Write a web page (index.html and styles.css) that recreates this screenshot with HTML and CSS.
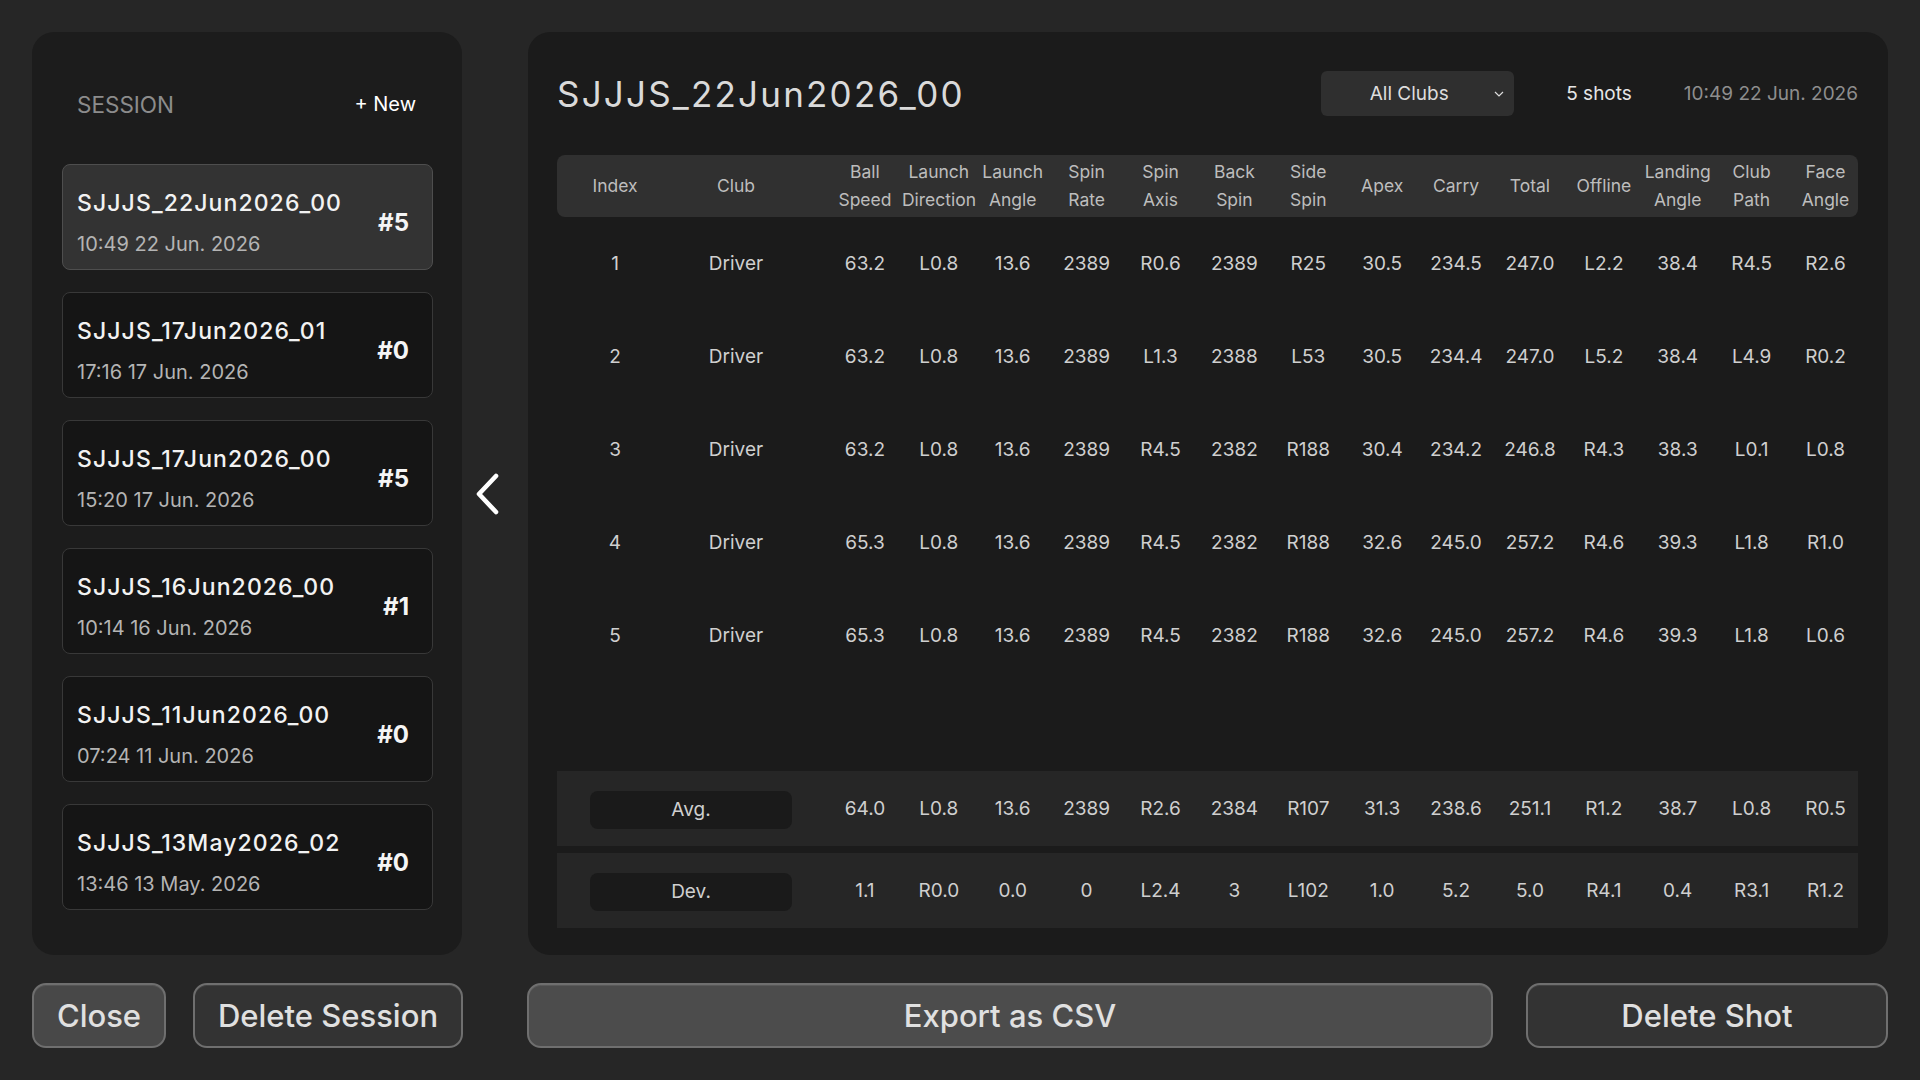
FILE: index.html
```
<!DOCTYPE html>
<html lang="en">
<head>
  <meta charset="UTF-8">
  <title>Sessions</title>
  <link rel="stylesheet" href="styles.css">
</head>
<body>

  <div class="main-row">
    <div class="session-panel">
      <div class="session-head">
        <span class="session-label">SESSION</span>
        <span class="new-link">+ New</span>
      </div>
      <div class="session-list">
        <div class="session-card selected">
          <div class="session-info">
            <div class="session-name">SJJJS_22Jun2026_00</div>
            <div class="session-date">10:49 22 Jun. 2026</div>
          </div>
          <div class="session-count">#5</div>
        </div>
        <div class="session-card">
          <div class="session-info">
            <div class="session-name">SJJJS_17Jun2026_01</div>
            <div class="session-date">17:16 17 Jun. 2026</div>
          </div>
          <div class="session-count">#0</div>
        </div>
        <div class="session-card">
          <div class="session-info">
            <div class="session-name">SJJJS_17Jun2026_00</div>
            <div class="session-date">15:20 17 Jun. 2026</div>
          </div>
          <div class="session-count">#5</div>
        </div>
        <div class="session-card">
          <div class="session-info">
            <div class="session-name">SJJJS_16Jun2026_00</div>
            <div class="session-date">10:14 16 Jun. 2026</div>
          </div>
          <div class="session-count">#1</div>
        </div>
        <div class="session-card">
          <div class="session-info">
            <div class="session-name">SJJJS_11Jun2026_00</div>
            <div class="session-date">07:24 11 Jun. 2026</div>
          </div>
          <div class="session-count">#0</div>
        </div>
        <div class="session-card">
          <div class="session-info">
            <div class="session-name">SJJJS_13May2026_02</div>
            <div class="session-date">13:46 13 May. 2026</div>
          </div>
          <div class="session-count">#0</div>
        </div>
      </div>
    </div>

    <div class="collapse-col">
      <svg class="collapse-icon" width="28" height="44" viewBox="0 0 28 44">
        <polyline points="22,4 5,22 22,40" fill="none" stroke="#ffffff" stroke-width="4.6" stroke-linecap="round" stroke-linejoin="round"/>
      </svg>
    </div>

    <div class="shots-panel">
      <div class="shots-head">
        <h1 class="shots-title">SJJJS_22Jun2026_00</h1>
        <div class="shots-meta">
          <div class="club-select">
            <span>All Clubs</span>
            <svg class="select-arrow" width="10" height="6" viewBox="0 0 10 6">
              <polyline points="1,1 5,5 9,1" fill="none" stroke="#dddddd" stroke-width="1.2"/>
            </svg>
          </div>
          <span class="shot-count">5 shots</span>
          <span class="shot-date">10:49 22 Jun. 2026</span>
        </div>
      </div>

      <div class="shot-grid grid-head">
        <div>Index</div>
        <div class="club-cell">Club</div>
        <div>Ball<br>Speed</div>
        <div>Launch<br>Direction</div>
        <div>Launch<br>Angle</div>
        <div>Spin<br>Rate</div>
        <div>Spin<br>Axis</div>
        <div>Back<br>Spin</div>
        <div>Side<br>Spin</div>
        <div>Apex</div>
        <div>Carry</div>
        <div>Total</div>
        <div>Offline</div>
        <div>Landing<br>Angle</div>
        <div>Club<br>Path</div>
        <div>Face<br>Angle</div>
      </div>

      <div class="shot-rows">
        <div class="shot-grid shot-row">
          <div>1</div><div class="club-cell">Driver</div>
          <div>63.2</div><div>L0.8</div><div>13.6</div><div>2389</div><div>R0.6</div><div>2389</div><div>R25</div>
          <div>30.5</div><div>234.5</div><div>247.0</div><div>L2.2</div><div>38.4</div><div>R4.5</div><div>R2.6</div>
        </div>
        <div class="shot-grid shot-row">
          <div>2</div><div class="club-cell">Driver</div>
          <div>63.2</div><div>L0.8</div><div>13.6</div><div>2389</div><div>L1.3</div><div>2388</div><div>L53</div>
          <div>30.5</div><div>234.4</div><div>247.0</div><div>L5.2</div><div>38.4</div><div>L4.9</div><div>R0.2</div>
        </div>
        <div class="shot-grid shot-row">
          <div>3</div><div class="club-cell">Driver</div>
          <div>63.2</div><div>L0.8</div><div>13.6</div><div>2389</div><div>R4.5</div><div>2382</div><div>R188</div>
          <div>30.4</div><div>234.2</div><div>246.8</div><div>R4.3</div><div>38.3</div><div>L0.1</div><div>L0.8</div>
        </div>
        <div class="shot-grid shot-row">
          <div>4</div><div class="club-cell">Driver</div>
          <div>65.3</div><div>L0.8</div><div>13.6</div><div>2389</div><div>R4.5</div><div>2382</div><div>R188</div>
          <div>32.6</div><div>245.0</div><div>257.2</div><div>R4.6</div><div>39.3</div><div>L1.8</div><div>R1.0</div>
        </div>
        <div class="shot-grid shot-row">
          <div>5</div><div class="club-cell">Driver</div>
          <div>65.3</div><div>L0.8</div><div>13.6</div><div>2389</div><div>R4.5</div><div>2382</div><div>R188</div>
          <div>32.6</div><div>245.0</div><div>257.2</div><div>R4.6</div><div>39.3</div><div>L1.8</div><div>L0.6</div>
        </div>
      </div>

      <div class="summary">
        <div class="shot-grid summary-row">
          <div class="summary-label"><span>Avg.</span></div>
          <div>64.0</div><div>L0.8</div><div>13.6</div><div>2389</div><div>R2.6</div><div>2384</div><div>R107</div>
          <div>31.3</div><div>238.6</div><div>251.1</div><div>R1.2</div><div>38.7</div><div>L0.8</div><div>R0.5</div>
        </div>
        <div class="shot-grid summary-row">
          <div class="summary-label"><span>Dev.</span></div>
          <div>1.1</div><div>R0.0</div><div>0.0</div><div>0</div><div>L2.4</div><div>3</div><div>L102</div>
          <div>1.0</div><div>5.2</div><div>5.0</div><div>R4.1</div><div>0.4</div><div>R3.1</div><div>R1.2</div>
        </div>
      </div>
    </div>
  </div>

  <div class="button-row">
    <button class="btn btn-close">Close</button>
    <button class="btn btn-delete-session">Delete Session</button>
    <button class="btn btn-export">Export as CSV</button>
    <button class="btn btn-delete-shot">Delete Shot</button>
  </div>

</body>
</html>
```

FILE: styles.css
```
* {
  box-sizing: border-box;
}
body {
  margin: 0;
  width: 1920px;
  height: 1080px;
  overflow: hidden;
  background-color: #262626;
  color: #dddddd;
  font-family: Inter, "Noto Sans", sans-serif;
  padding: 32px 32px 0 32px;
}

.main-row {
  display: flex;
  height: 923px;
}

/* left: session list */
.session-panel {
  flex: 0 0 430px;
  background: #1c1c1c;
  border-radius: 22px;
  padding: 57px 29px 0 30px;
}
.session-head {
  display: flex;
  justify-content: space-between;
  align-items: center;
  padding: 0 17px 0 15px;
  height: 30px;
  font-size: 22.5px;
  margin-bottom: 45px;
}
.session-label {
  color: #8c8c8c;
}
.new-link {
  color: #ffffff;
  font-size: 20px;
}
.session-list {
  display: flex;
  flex-direction: column;
  gap: 22px;
}
.session-card {
  height: 106px;
  display: flex;
  justify-content: space-between;
  align-items: center;
  padding: 0 23px 0 14px;
  background: #151515;
  border: 1px solid #383838;
  border-radius: 8px;
}
.session-card.selected {
  background: #333333;
  border-color: #4e4e4e;
}
.session-info {
  padding-top: 10px;
}
.session-name {
  font-size: 23px;
  line-height: 28px;
  font-weight: 500;
  letter-spacing: 1.1px;
  color: #f2f2f2;
}
.session-date {
  margin-top: 15px;
  font-size: 20px;
  line-height: 24px;
  color: #b4b4b4;
}
.session-count {
  margin-top: 10px;
  font-size: 24px;
  font-weight: 700;
  color: #f5f5f5;
}

/* collapse arrow */
.collapse-col {
  flex: 0 0 66px;
  display: flex;
  align-items: center;
  justify-content: center;
  padding-right: 14px;
}

/* right: shots table */
.shots-panel {
  flex: 1;
  min-width: 0;
  background: #1b1b1b;
  border-radius: 22px;
  padding: 39px 30px 27px 29px;
  display: flex;
  flex-direction: column;
}
.shots-head {
  display: flex;
  justify-content: space-between;
  align-items: center;
  height: 45px;
}
.shots-title {
  margin: 0;
  font-size: 35px;
  font-weight: 400;
  letter-spacing: 2.2px;
  color: #dadada;
}
.shots-meta {
  display: flex;
  align-items: center;
  gap: 52px;
  font-size: 19px;
}
.club-select {
  width: 193px;
  height: 45px;
  background: #2f2f2f;
  border-radius: 6px;
  display: flex;
  align-items: center;
  justify-content: center;
  padding-right: 17px;
  position: relative;
  color: #dddddd;
}
.select-arrow {
  position: absolute;
  right: 10px;
  top: 20px;
}
.shot-count {
  color: #e6e6e6;
}
.shot-date {
  color: #8e8e8e;
}

.shot-grid {
  display: grid;
  grid-template-columns: 116px 155px repeat(14, 73.9px);
  align-items: center;
  text-align: center;
}
.club-cell {
  padding-right: 29px;
}
.grid-head {
  margin-top: 39px;
  height: 62px;
  background: #303030;
  border-radius: 8px;
  font-size: 17.5px;
  line-height: 28px;
  color: #bdbdbd;
}
.shot-rows {
  flex: 1;
}
.shot-row {
  height: 93px;
  font-size: 19px;
  color: #cfcfcf;
}

.summary {
  display: flex;
  flex-direction: column;
  gap: 7px;
}
.summary-row {
  height: 75px;
  background: #262626;
  font-size: 19px;
  color: #cfcfcf;
}
.summary-label {
  grid-column: span 2;
  display: flex;
  justify-content: center;
}
.summary-label span {
  width: 202px;
  height: 38px;
  line-height: 38px;
  background: #1a1a1a;
  border-radius: 8px;
  margin-top: 3px;
  margin-right: 3px;
}

/* bottom buttons */
.button-row {
  display: flex;
  margin-top: 28px;
  height: 65px;
}
.btn {
  flex-shrink: 0;
  height: 65px;
  font-family: Inter, "Noto Sans", sans-serif;
  font-size: 31px;
  font-weight: 500;
  color: #e0e0e0;
  background: #333333;
  border: 2px solid #6f6f6f;
  border-radius: 14px;
  box-shadow: inset 0 1px 0 rgba(255, 255, 255, 0.08);
  padding: 0;
}
.btn-close {
  width: 134px;
  background: #484848;
}
.btn-delete-session {
  width: 270px;
  margin-left: 27px;
}
.btn-export {
  width: 966px;
  margin-left: 64px;
  background: #4c4c4c;
}
.btn-delete-shot {
  width: 362px;
  margin-left: 33px;
}
```
